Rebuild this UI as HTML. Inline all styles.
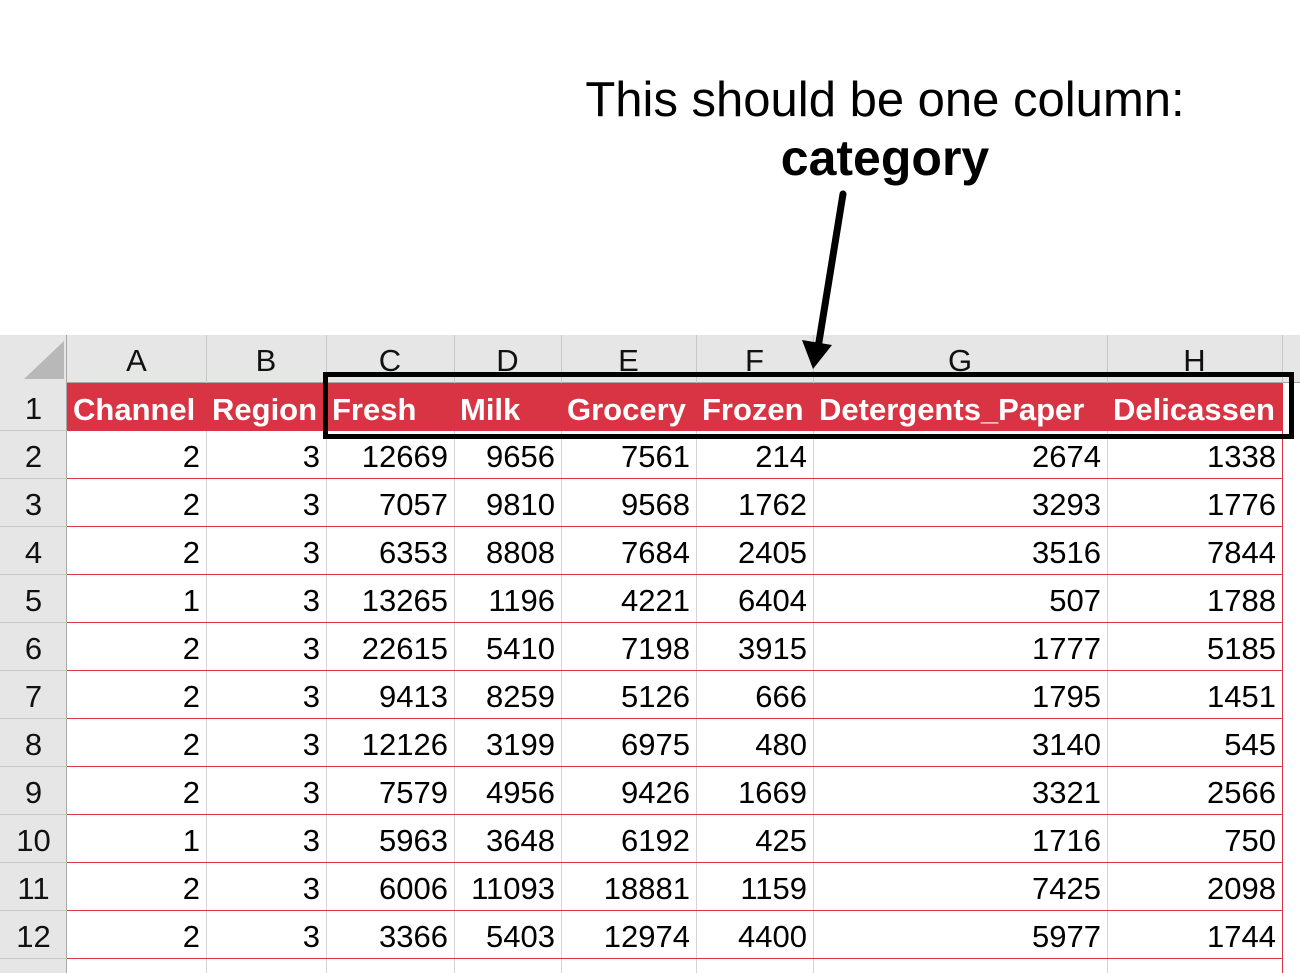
<!DOCTYPE html>
<html style="width:1300px;height:973px;overflow:hidden"><head><meta charset="utf-8"><style>
*{margin:0;padding:0;box-sizing:border-box}
body{width:1300px;height:973px;background:#fff;position:relative;overflow:hidden;font-family:"Liberation Sans",sans-serif}
.a{position:absolute}
.t{position:absolute;font-size:31px;line-height:48px;white-space:nowrap}
</style></head><body>
<div class="a" style="left:0;top:335px;width:1300px;height:48px;background:#e6e6e6"></div>
<div class="a" style="left:0;top:335px;width:67px;height:638px;background:#e6e6e6;border-right:1px solid #a8a8a8"></div>
<svg class="a" style="left:20px;top:339px" width="46" height="42"><polygon points="44,2 44,40 4,40" fill="#b8b8b8"/></svg>
<div class="a" style="left:67px;top:382px;width:1233px;height:1px;background:#a8a8a8"></div>
<div class="a" style="left:67px;top:383px;width:1215px;height:48px;background:#d93444"></div>
<div id="g"></div>
<svg class="a" style="left:0;top:0" width="1300" height="973">
<line x1="843" y1="194" x2="818" y2="348" stroke="#000" stroke-width="7" stroke-linecap="round"/>
<polygon points="802,340 832,345 813,369" fill="#000"/>
</svg>
<div class="a" style="left:323px;top:372px;width:971px;height:67px;border:5px solid #000"></div>
<div class="a" style="left:540px;top:70px;width:690px;text-align:center;font-family:'Liberation Sans Narrow','Liberation Sans',sans-serif;font-size:49px;line-height:60px;color:#000">This should be one column:</div>
<div class="a" style="left:540px;top:128px;width:690px;text-align:center;font-family:'Liberation Sans Narrow','Liberation Sans',sans-serif;font-weight:bold;font-size:50px;line-height:60px;color:#000">category</div>
<script>
var cols=[67,206,326,454,561,696,813,1107,1282];
var L="ABCDEFGH",H=["Channel","Region","Fresh","Milk","Grocery","Frozen","Detergents_Paper","Delicassen"];
var D=[[2,3,12669,9656,7561,214,2674,1338],[2,3,7057,9810,9568,1762,3293,1776],[2,3,6353,8808,7684,2405,3516,7844],[1,3,13265,1196,4221,6404,507,1788],[2,3,22615,5410,7198,3915,1777,5185],[2,3,9413,8259,5126,666,1795,1451],[2,3,12126,3199,6975,480,3140,545],[2,3,7579,4956,9426,1669,3321,2566],[1,3,5963,3648,6192,425,1716,750],[2,3,6006,11093,18881,1159,7425,2098],[2,3,3366,5403,12974,4400,5977,1744]];
var h="";
for(var i=1;i<cols.length;i++){h+='<div class="a" style="left:'+cols[i]+'px;top:335px;width:1px;height:48px;background:#c8c8c8"></div>';h+='<div class="a" style="left:'+cols[i]+'px;top:431px;width:1px;height:542px;background:#d4d4d4"></div>';}
h+='<div class="a" style="left:1282px;top:383px;width:1px;height:590px;background:#d93444"></div>';
for(var i=0;i<8;i++){h+='<div class="t" style="left:'+cols[i]+'px;top:337px;width:'+(cols[i+1]-cols[i])+'px;text-align:center;color:#111">'+L[i]+'</div>';
h+='<div class="t" style="left:'+(cols[i]+6)+'px;top:386px;color:#fff;font-weight:bold">'+H[i]+'</div>';}
for(var r=0;r<12;r++){var y=383+48*r;h+='<div class="t" style="left:0;top:'+(y+2)+'px;width:67px;text-align:center;color:#111">'+(r+1)+'</div>';
h+='<div class="a" style="left:0;top:'+(y+47)+'px;width:67px;height:1px;background:#c8c8c8"></div>';}
for(var r=0;r<11;r++){var y=431+48*r;h+='<div class="a" style="left:67px;top:'+(y+47)+'px;width:1215px;height:1px;background:#d93444"></div>';
for(var i=0;i<8;i++)h+='<div class="t" style="left:'+cols[i]+'px;top:'+(y+2)+'px;width:'+(cols[i+1]-cols[i]-6)+'px;text-align:right;color:#000">'+D[r][i]+'</div>';}
document.getElementById("g").innerHTML=h;
</script>
</body></html>
